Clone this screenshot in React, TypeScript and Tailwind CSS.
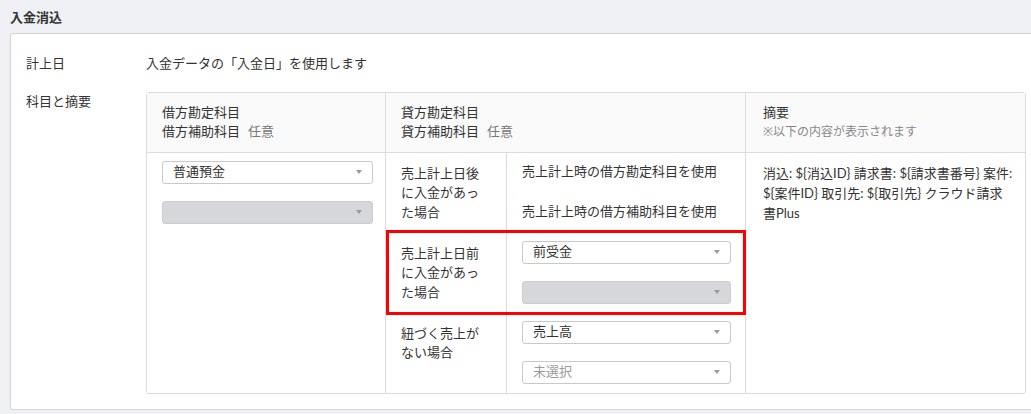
import React from "react";

const font = { fontFamily: '"Noto Sans", "Noto Sans CJK JP", sans-serif' };
const sumFont = { fontFamily: 'Lato, "Noto Sans CJK JP", sans-serif' };

function Caret() {
  return (
    <svg width="6" height="4" viewBox="0 0 6 4" className="shrink-0">
      <path d="M0 0 L6 0 L3 4 Z" fill="#9a9a9a" />
    </svg>
  );
}

function Select({ value, placeholder, disabled }: { value?: string; placeholder?: string; disabled?: boolean }) {
  return (
    <div
      className={
        "h-[23px] rounded-[3px] border flex items-center justify-between pl-[10px] pr-[10px] " +
        (disabled ? "bg-[#d5d7da] border-[#cbcdd0]" : "bg-white border-[#c9c9c9]")
      }
    >
      <span className={value ? "text-[#333]" : "text-[#9a9a9a]"}>{value ?? placeholder ?? ""}</span>
      <Caret />
    </div>
  );
}

const summaryLines = [
  "消込: ${消込ID} 請求書: ${請求書番号} 案件:",
  "${案件ID} 取引先: ${取引先} クラウド請求",
  "書Plus",
];

export default function App() {
  return (
    <div
      className="w-[1031px] h-[414px] overflow-hidden bg-[#eff0f3] text-[13px] leading-[19.5px] text-[#333]"
      style={font}
    >
      <div className="h-[33px] flex items-center pl-[10px] pt-[2px] font-semibold">入金消込</div>
      <div className="ml-[10px] w-[1040px] h-[377px] bg-white border border-[#d3d5d9] rounded-[3px] pl-[15px] pt-[20px]">
        <div className="flex">
          <div className="w-[120px]">計上日</div>
          <div>入金データの「入金日」を使用します</div>
        </div>
        <div className="flex mt-[18px]">
          <div className="w-[120px]">科目と摘要</div>
          <div className="w-[880px] border border-[#dcdcdc] rounded-[3px] flex flex-col">
            <div className="flex bg-[#fafafa] border-b border-[#dcdcdc]">
              <div className="w-[239px] border-r border-[#dcdcdc] px-[15px] py-[10px]">
                <div>借方勘定科目</div>
                <div>
                  借方補助科目<span className="ml-[8px] text-[#777]">任意</span>
                </div>
              </div>
              <div className="w-[360px] border-r border-[#dcdcdc] px-[15px] py-[10px]">
                <div>貸方勘定科目</div>
                <div>
                  貸方補助科目<span className="ml-[8px] text-[#777]">任意</span>
                </div>
              </div>
              <div className="flex-1 px-[17px] py-[10px]">
                <div>摘要</div>
                <div className="text-[12px] text-[#888]">※以下の内容が表示されます</div>
              </div>
            </div>
            <div className="flex">
              <div className="w-[239px] border-r border-[#dcdcdc] pl-[15px] pr-[12px] pt-[8px] flex flex-col gap-[17px]">
                <Select value="普通預金" />
                <Select disabled />
              </div>
              <div className="w-[360px] border-r border-[#dcdcdc] flex flex-col">
                <div className="h-[80px] flex border-b border-[#e3e3e3]">
                  <div className="w-[121px] border-r border-[#dcdcdc] pl-[15px] pr-[16px] pt-[11px]">
                    売上計上日後に入金があった場合
                  </div>
                  <div className="flex-1 pl-[15px] pr-[14px] pt-[8px] flex flex-col gap-[17px]">
                    <div className="h-[23px] flex items-center">売上計上時の借方勘定科目を使用</div>
                    <div className="h-[23px] flex items-center">売上計上時の借方補助科目を使用</div>
                  </div>
                </div>
                <div className="relative h-[80px] flex border-b border-[#e3e3e3]">
                  <div className="w-[121px] border-r border-[#dcdcdc] pl-[15px] pr-[16px] pt-[11px]">
                    売上計上日前に入金があった場合
                  </div>
                  <div className="flex-1 pl-[15px] pr-[14px] pt-[8px] flex flex-col gap-[17px]">
                    <Select value="前受金" />
                    <Select disabled />
                  </div>
                  <div className="absolute top-[-3px] bottom-[-3px] left-[0px] right-[-1px] border-[3px] border-[#ff0000] pointer-events-none" />
                </div>
                <div className="h-[80px] flex">
                  <div className="w-[121px] border-r border-[#dcdcdc] pl-[15px] pr-[16px] pt-[11px]">
                    紐づく売上がない場合
                  </div>
                  <div className="flex-1 pl-[15px] pr-[14px] pt-[8px] flex flex-col gap-[17px]">
                    <Select value="売上高" />
                    <Select placeholder="未選択" />
                  </div>
                </div>
              </div>
              <div className="flex-1 pl-[17px] pr-[4px] pt-[10px] leading-[20px]" style={sumFont}>
                {summaryLines.map((l) => (
                  <div key={l} className="whitespace-nowrap">
                    {l}
                  </div>
                ))}
              </div>
            </div>
          </div>
        </div>
      </div>
    </div>
  );
}
